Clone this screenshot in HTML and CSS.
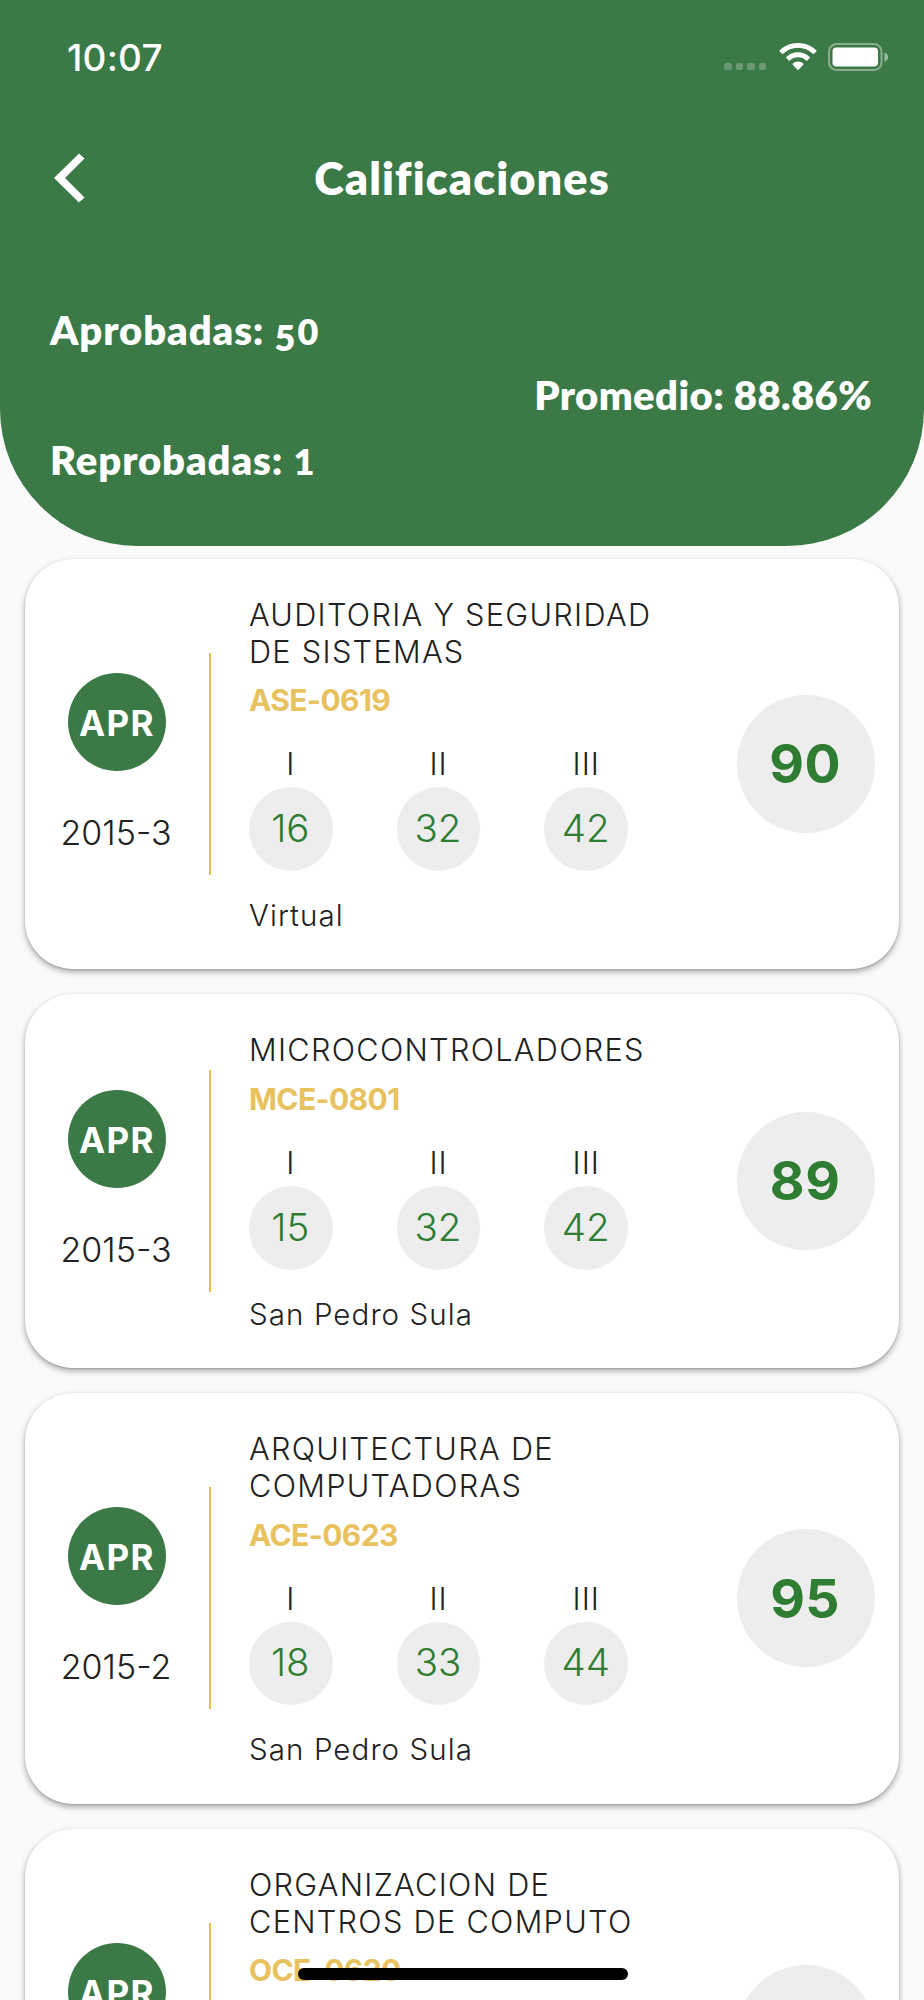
FILE: index.html
```html
<!DOCTYPE html>
<html lang="es">

<head>
  <meta charset="UTF-8">
  <meta name="viewport" content="width=device-width, initial-scale=1.0">
  <title>Calificaciones</title>
  <link rel="stylesheet" href="styles.css">
</head>

<body>

  <header class="header">
    <div class="status-bar">
      <span class="time">10:07</span>
      <div class="status-icons">
        <div class="signal"><i></i><i></i><i></i><i></i></div>
        <svg class="wifi" width="38" height="28" viewBox="0 0 38 28" fill="#fff">
          <path d="M19 0C26.2 0 32.700 2.800 37.300 7.300Q37.900 7.900 37.300 8.500L35 10.800Q34.400 11.400 33.800 10.800A21.200 21.200 0 0 0 4.200 10.800Q3.600 11.400 3 10.800L.7 8.500Q.1 7.900 .7 7.300C5.300 2.800 11.800 0 19 0Z"/>
          <path d="M19 9.300C23.700 9.300 27.700 11.100 30.700 13.900Q31.300 14.500 30.700 15.100L28.300 17.400Q27.700 18 27.100 17.400A11.800 11.800 0 0 0 10.900 17.400Q10.300 18 9.700 17.400L7.300 15.100Q6.700 14.500 7.300 13.900C10.300 11.100 14.300 9.300 19 9.300Z"/>
          <path d="M19 18.600C21.100 18.600 22.900 19.400 24.200 20.500Q24.800 21.100 24.200 21.700L19.600 26.800Q19 27.400 18.400 26.800L13.800 21.700Q13.200 21.100 13.800 20.500C15.100 19.400 16.900 18.600 19 18.600Z"/>
        </svg>
        <svg class="battery" width="61" height="28" viewBox="0 0 61 28">
          <rect x="1" y="1" width="52.500" height="26" rx="7.500" fill="none" stroke="#fff" stroke-opacity=".4" stroke-width="2"/>
          <rect x="4.500" y="4.500" width="45.500" height="19" rx="4" fill="#fff"/>
          <path d="M56.500 9.200Q60 10.800 60 14T56.500 18.800Z" fill="#fff" fill-opacity=".5"/>
        </svg>
      </div>
    </div>

    <div class="nav">
      <svg class="back" width="31" height="50" viewBox="0 0 31 50">
        <path d="M0 25L25 .5L30.500 5.500L11 25L30.500 44.500L25 49.500Z" fill="#fff"/>
      </svg>
      <h1>Calificaciones</h1>
    </div>

    <div class="stats">
      <div class="counts">
        <p>Aprobadas: <span class="num low">5</span><span class="num">0</span></p>
        <p>Reprobadas: <span class="num">1</span></p>
      </div>
      <p class="average">Promedio: 88.86%</p>
    </div>
  </header>

  <main class="courses">

    <article class="card">
      <div class="status">
        <div class="badge">APR</div>
        <div class="period">2015-3</div>
      </div>
      <div class="divider"></div>
      <div class="info">
        <h2>AUDITORIA Y SEGURIDAD<br>DE SISTEMAS</h2>
        <div class="code">ASE-0619</div>
        <div class="partials">
          <div class="partial"><span>I</span><b>16</b></div>
          <div class="partial"><span>II</span><b>32</b></div>
          <div class="partial"><span>III</span><b>42</b></div>
        </div>
        <div class="campus">Virtual</div>
      </div>
      <div class="final">90</div>
    </article>

    <article class="card">
      <div class="status">
        <div class="badge">APR</div>
        <div class="period">2015-3</div>
      </div>
      <div class="divider"></div>
      <div class="info">
        <h2>MICROCONTROLADORES</h2>
        <div class="code">MCE-0801</div>
        <div class="partials">
          <div class="partial"><span>I</span><b>15</b></div>
          <div class="partial"><span>II</span><b>32</b></div>
          <div class="partial"><span>III</span><b>42</b></div>
        </div>
        <div class="campus">San Pedro Sula</div>
      </div>
      <div class="final">89</div>
    </article>

    <article class="card">
      <div class="status">
        <div class="badge">APR</div>
        <div class="period">2015-2</div>
      </div>
      <div class="divider"></div>
      <div class="info">
        <h2>ARQUITECTURA DE<br>COMPUTADORAS</h2>
        <div class="code">ACE-0623</div>
        <div class="partials">
          <div class="partial"><span>I</span><b>18</b></div>
          <div class="partial"><span>II</span><b>33</b></div>
          <div class="partial"><span>III</span><b>44</b></div>
        </div>
        <div class="campus">San Pedro Sula</div>
      </div>
      <div class="final">95</div>
    </article>

    <!-- only the top of this card is on screen -->
    <article class="card card-cut">
      <div class="status">
        <div class="badge">APR</div>
      </div>
      <div class="divider"></div>
      <div class="info">
        <h2>ORGANIZACION DE<br>CENTROS DE COMPUTO</h2>
        <div class="code">OCE-0620</div>
      </div>
      <div class="final"></div>
    </article>

  </main>

  <div class="home-indicator"></div>

</body>

</html>
```
FILE: styles.css
```css
* {
  box-sizing: border-box;
}

html {
  overflow: hidden;
}

body {
  margin: 0;
  height: 2000px;
  overflow: hidden;
  background: #fafafa;
  color: #212121;
  font-family: Inter, "Liberation Sans", sans-serif;
  font-weight: 300;
}

h1,
h2,
p {
  margin: 0;
}

/* header */
.header {
  height: 546px;
  background: #3b7946;
  color: #fff;
  border-radius: 0 0 137px 137px;
}

.status-bar {
  display: flex;
  justify-content: space-between;
  align-items: center;
  height: 114px;
  padding: 0 35px 0 67px;
}

.time {
  font-size: 37px;
  font-weight: 550;
  letter-spacing: 0.2px;
}

.status-icons {
  display: flex;
  align-items: flex-end;
}

.signal {
  display: flex;
  gap: 4px;
  margin: 0 12.5px 1px 0;
}

.signal i {
  width: 7.5px;
  height: 7.5px;
  border-radius: 2.5px;
  background: rgba(255, 255, 255, 0.25);
}

.wifi {
  margin-right: 11.5px;
}

.nav {
  display: grid;
  grid-template-columns: 31px 1fr 31px;
  align-items: center;
  height: 127px;
  padding: 0 54px;
}

.nav h1 {
  font-family: Lato, sans-serif;
  font-size: 45px;
  font-weight: 800;
  letter-spacing: 1.1px;
  text-align: center;
}

.stats {
  display: flex;
  justify-content: space-between;
  align-items: center;
  height: 307px;
  padding: 0 52px 0 50px;
  font-family: Lato, sans-serif;
  font-size: 40px;
  font-weight: 800;
  line-height: 50px;
}

.counts {
  display: flex;
  flex-direction: column;
  gap: 80px;
  letter-spacing: 0.9px;
}

.average {
  letter-spacing: 0.4px;
}

/* old-style figures */
.num {
  font-size: 36px;
  line-height: 1;
  letter-spacing: 2.2px;
}

.low {
  vertical-align: -6px;
}

/* course cards */
.courses {
  display: flex;
  flex-direction: column;
  gap: 24.8px;
  height: 1454px;
  padding: 12.5px 25px 0;
  overflow: hidden;
}

.card {
  display: flex;
  flex-shrink: 0;
  align-items: center;
  padding: 37.2px 24.5px 36.5px 25px;
  background: #fff;
  border-radius: 48px;
  box-shadow: 0 3px 6px rgba(0, 0, 0, 0.32), 0 1px 2px rgba(0, 0, 0, 0.15);
}

.card-cut {
  height: 411px;
}

.card-cut .info {
  align-self: flex-start;
}

.card-cut .status {
  padding-bottom: 84px;
}

.status {
  display: flex;
  flex-direction: column;
  align-items: center;
  gap: 42px;
  width: 134px;
  margin-top: -1px;
}

.badge {
  display: flex;
  justify-content: center;
  align-items: center;
  width: 98.5px;
  height: 98.5px;
  padding-top: 2px;
  border-radius: 50%;
  background: #3b7946;
  color: #fff;
  font-size: 35px;
  font-weight: 700;
  letter-spacing: 1.4px;
}

.period {
  padding: 0 2px 3px 0;
  font-size: 34px;
  line-height: 39px;
}

.divider {
  width: 2.3px;
  height: 221.7px;
  margin: -1px 37.7px 0 25px;
  background: #eabd52;
}

.info {
  flex: 1;
}

.info h2 {
  font-size: 30.7px;
  font-weight: 300;
  line-height: 37px;
  letter-spacing: 1.3px;
  white-space: nowrap;
}

.code {
  margin-top: 12.5px;
  color: #e9c260;
  font-size: 30px;
  font-weight: 700;
  line-height: 36px;
  letter-spacing: -0.6px;
}

.partials {
  display: flex;
  gap: 64px;
  margin-top: 27px;
}

.partial {
  display: flex;
  flex-direction: column;
  align-items: center;
  gap: 5px;
}

.partial span {
  font-size: 31px;
  line-height: 37px;
  letter-spacing: 1px;
}

.partial b {
  display: flex;
  justify-content: center;
  align-items: center;
  width: 83.7px;
  height: 83.7px;
  padding: 0 1px 2px 0;
  border-radius: 50%;
  background: #ededed;
  color: #2e7d32;
  font-size: 38.5px;
  font-weight: 300;
}

.campus {
  margin-top: 26px;
  font-size: 29.5px;
  line-height: 36px;
  letter-spacing: 1.1px;
}

.final {
  display: flex;
  justify-content: center;
  align-items: center;
  width: 137.8px;
  height: 137.8px;
  margin-top: -1px;
  padding-right: 1px;
  border-radius: 50%;
  background: #ededed;
  color: #2e7d32;
  font-size: 53.5px;
  font-weight: 700;
  letter-spacing: 0.5px;
}

/* sits over the list */
.home-indicator {
  position: fixed;
  left: 297.5px;
  bottom: 20px;
  width: 330px;
  height: 12.5px;
  border-radius: 7px;
  background: #000;
}
```
